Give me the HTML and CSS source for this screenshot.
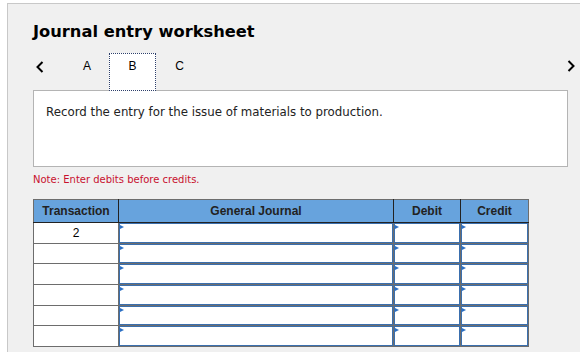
FILE: index.html
```html
<!doctype html>
<html lang="en">
<head>
	<meta charset="UTF-8">
	<meta name="viewport" content="width=device-width, initial-scale=1.0">
	<title>Journal entry worksheet</title>
	<link rel="stylesheet" href="styles.css">
</head>
<body>
<div class="panel">
	<h2 class="title">Journal entry worksheet</h2>
	<div class="tabs">
		<span class="nav prev">
			<svg width="8" height="12" viewBox="0 0 8 12"><polyline points="6.5,1 1.5,6 6.5,11" fill="none" stroke="#000" stroke-width="2"/></svg>
		</span>
		<span class="tab tab-a">A</span>
		<span class="tab active">B</span>
		<span class="tab">C</span>
		<span class="nav next">
			<svg width="8" height="12" viewBox="0 0 8 12"><polyline points="1.5,1 6.5,6 1.5,11" fill="none" stroke="#000" stroke-width="2"/></svg>
		</span>
	</div>
	<div class="question">Record the entry for the issue of materials to production.</div>
	<p class="note">Note: Enter debits before credits.</p>
	<table class="journal">
		<colgroup>
			<col class="c-tr">
			<col class="c-gj">
			<col class="c-dr">
			<col class="c-cr">
		</colgroup>
		<tr>
			<th>Transaction</th>
			<th>General Journal</th>
			<th>Debit</th>
			<th>Credit</th>
		</tr>
		<tr>
			<td class="tr">2</td>
			<td><div class="field"></div></td>
			<td><div class="field"></div></td>
			<td><div class="field"></div></td>
		</tr>
		<tr>
			<td class="tr"></td>
			<td><div class="field"></div></td>
			<td><div class="field"></div></td>
			<td><div class="field"></div></td>
		</tr>
		<tr>
			<td class="tr"></td>
			<td><div class="field"></div></td>
			<td><div class="field"></div></td>
			<td><div class="field"></div></td>
		</tr>
		<tr>
			<td class="tr"></td>
			<td><div class="field"></div></td>
			<td><div class="field"></div></td>
			<td><div class="field"></div></td>
		</tr>
		<tr>
			<td class="tr"></td>
			<td><div class="field"></div></td>
			<td><div class="field"></div></td>
			<td><div class="field"></div></td>
		</tr>
		<tr>
			<td class="tr"></td>
			<td><div class="field"></div></td>
			<td><div class="field"></div></td>
			<td><div class="field"></div></td>
		</tr>
	</table>
</div>
</body>
</html>
```

FILE: styles.css
```css
* {
	box-sizing: border-box;
}
body {
	margin: 0;
	background: #fff;
	font-family: "DejaVu Sans", Verdana, sans-serif;
}
.panel {
	margin: 3px 0 0 7px;
	border-top: 1px solid #c8c8c8;
	border-left: 1px solid #c8c8c8;
	background: #f0f0f0;
	padding: 18px 0 20px 25px;
	min-height: 349px;
}
.title {
	margin: 0;
	font-size: 16.3px;
	line-height: 20px;
	font-weight: bold;
	color: #000;
}
.tabs {
	display: flex;
	align-items: flex-start;
	width: 542px;
	height: 37px;
	margin-top: 11px;
}
.nav {
	display: block;
	width: 29px;
	padding: 8px 0 0 3px;
}
.nav svg {
	display: block;
}
.next {
	width: auto;
	margin-left: auto;
	padding: 7px 0 0 0;
}
.tab {
	width: 47px;
	height: 38px;
	padding-top: 6px;
	text-align: center;
	font: 12px/14px "Liberation Sans", Arial, sans-serif;
	color: #000;
}
.tab-a {
	padding-left: 3px;
}
.active {
	position: relative;
	z-index: 1;
	padding-top: 5px;
	background: #fff;
	border: 1px dotted #2d3f6b;
}
.question {
	width: 535px;
	height: 77px;
	padding: 13px 12px;
	background: #fff;
	border: 1px solid #b4b4b4;
	font-size: 11.8px;
	line-height: 16px;
	color: #222;
}
.note {
	margin: 6px 0 0;
	font-size: 10px;
	line-height: 14px;
	color: #c8102e;
}
.journal {
	margin-top: 12px;
	width: 495px;
	table-layout: fixed;
	border-collapse: collapse;
	border: 1px solid #6d6d6d;
	font-family: "Liberation Sans", Arial, sans-serif;
	font-size: 12px;
	color: #000;
}
.c-tr { width: 85px; }
.c-gj { width: 275px; }
.c-dr { width: 67px; }
.c-cr { width: 68px; }
.journal th {
	height: 23px;
	padding: 0;
	background: #67a3dd;
	border: 1px solid #6d6d6d;
	border-bottom-color: #222;
	font-weight: bold;
	color: #222;
	text-align: center;
}
.journal th:not(:last-child) {
	border-right-color: #222;
}
.journal td {
	height: 19.7px;
	padding: 0;
	border: 1px solid #6d6d6d;
	background: #fff;
	vertical-align: top;
}
.journal .tr {
	text-align: center;
	vertical-align: middle;
}
.field {
	position: relative;
	height: 19.7px;
	border: 1px solid #3a6fae;
}
.field::before {
	content: "";
	position: absolute;
	left: 0;
	top: 1px;
	border-left: 4px solid #2b6fc4;
	border-top: 2.5px solid transparent;
	border-bottom: 2.5px solid transparent;
}
```
